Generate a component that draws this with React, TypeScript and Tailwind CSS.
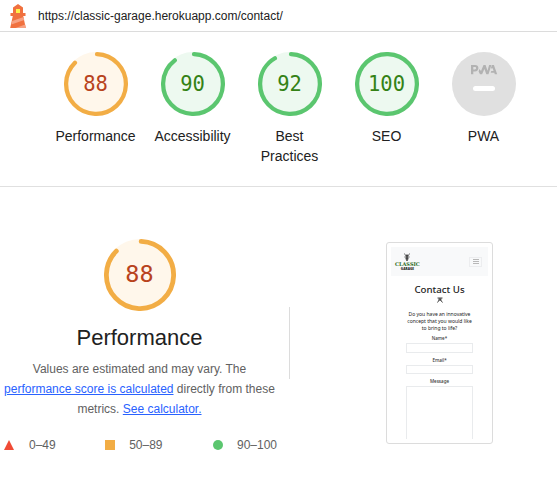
import React from "react";

const tones = {
  orange: { stroke: "#f2ad45", fill: "#fff7eb", text: "#b8431d" },
  green: { stroke: "#5bc66f", fill: "#edf9f0", text: "#348216" },
};

type Tone = keyof typeof tones;

function Gauge({ score, tone, size }: { score: number; tone: Tone; size: number }) {
  const c = tones[tone];
  const length = 2 * Math.PI * 56;
  const dash = score === 100 ? length : (score / 100) * length - 4;
  return (
    <div className="grid place-items-center" style={{ width: size, height: size }}>
      <svg viewBox="0 0 120 120" className="col-start-1 row-start-1 h-full w-full">
        <circle cx="60" cy="60" r="60" fill={c.fill} />
        <circle
          cx="60"
          cy="60"
          r="56"
          fill="none"
          stroke={c.stroke}
          strokeWidth="8"
          strokeLinecap="round"
          strokeDasharray={`${dash} ${length}`}
          transform="rotate(-88 60 60)"
        />
      </svg>
      <span
        className="col-start-1 row-start-1 -ml-px font-['DejaVu_Sans_Mono',monospace] leading-none"
        style={{ color: c.text, fontSize: size > 64 ? 23.5 : 20.5 }}
      >
        {score}
      </span>
    </div>
  );
}

function Lighthouse() {
  return (
    <svg width="16" height="24" viewBox="0 0 16 24">
      <path d="M8 0 L13 3.500 V9 H15.500 V12 H13.200 L15.800 24 H0.200 L2.800 12 H0.500 V9 H3 V3.500 Z" fill="#f0713f" />
      <path d="M2.200 17 L13.600 13 L14.200 16 L1.400 20.500 Z" fill="#f7a283" />
      <path d="M5.500 24 L15.200 20.500 L15.800 24 Z" fill="#f7a283" />
      <rect x="6" y="5" width="4" height="4" fill="#fff04a" />
    </svg>
  );
}

function PwaBadge() {
  return (
    <svg width="64" height="64" viewBox="0 0 64 64">
      <circle cx="32" cy="32" r="32" fill="#e0e0e0" />
      <g fill="#b2b2b2">
        <path fillRule="evenodd" d="M19 13 H23 C25.300 13 26.400 14.200 26.400 16 C26.400 18 25.200 19.400 23 19.400 H21.300 V22.300 H19 Z M21.300 15 V17.500 H22.800 C23.700 17.500 24.100 17 24.100 16.300 C24.100 15.500 23.700 15 22.800 15 Z" />
        <path d="M27.400 17 L29 19 L31.500 13 H33.600 L35.500 18.700 L37.100 13 H39.400 L36.500 22.300 H34.300 L32.400 17 L30.100 22.300 H28 L26.600 19.500 Z" />
        <path d="M39.900 13 H41.900 L45.200 22.300 H42.800 L42.300 20.800 H38.700 L39.300 18.900 H41.600 L40.500 15.700 L40 17 L39 15.700 Z" />
      </g>
      <rect x="21" y="34" width="22" height="5" rx="2.500" fill="#fff" />
    </svg>
  );
}

function Category({ label, children }: { label: string; children: React.ReactNode }) {
  return (
    <div className="flex w-[97px] flex-col items-center">
      {children}
      <div className="mt-[10px] -ml-px max-w-[81px] text-center text-[14px] leading-5 text-[#212121]">
        <span className="flex justify-center">
          <span>{label}</span>
        </span>
      </div>
    </div>
  );
}

function Field({ label, className }: { label: string; className: string }) {
  return (
    <div className="flex flex-col items-center">
      <span className="text-[4.500px] leading-[6px] font-medium text-[#333]">{label}</span>
      <div className={`mt-[2px] w-[67px] border border-[#e9ebed] ${className}`} />
    </div>
  );
}

function PagePreview() {
  return (
    <div className="h-[202px] w-[107px] rounded-[3px] border border-[#dcdcdc] bg-white p-1 font-['Noto_Sans',sans-serif]">
      <div className="flex h-full flex-col items-center overflow-hidden">
        <div className="flex h-[29px] w-full shrink-0 items-center justify-between bg-[#f8f9fa] pr-[6px] pl-1">
          <div className="flex flex-col items-center">
            <svg className="shrink-0" width="8" height="8" viewBox="0 0 8 8" fill="none" stroke="#333">
              <path d="M1.500 0.500 L2.500 2.500 H5.500 L6.500 0.500" strokeWidth=".7" />
              <path d="M4 1.500 V8" strokeWidth="1.400" />
              <path d="M1.500 4 H6.500 M2.300 5.800 H5.700" strokeWidth=".9" />
            </svg>
            <span className="font-['DejaVu_Serif',serif] text-[5px] leading-[6px] font-bold text-[#2c6b1e]">CLASSIC</span>
            <span className="text-[3.200px] leading-[4px] font-black text-[#222]">GARAGE</span>
          </div>
          <div className="flex h-[10px] w-[13px] flex-col items-center justify-center gap-[1px] border border-[#ecedef]">
            <i className="h-px w-[6px] bg-[#b8b8b8]" />
            <i className="h-px w-[6px] bg-[#b8b8b8]" />
            <i className="h-px w-[6px] bg-[#b8b8b8]" />
          </div>
        </div>
        <div className="mt-[7px] shrink-0 text-[9.700px] leading-[13px] font-medium text-[#222]">Contact Us</div>
        <svg className="mt-[1px] shrink-0" width="6" height="6" viewBox="0 0 6 6" fill="none" stroke="#333">
          <path d="M0.500 1 H5.500 M2.200 1 V3 L0.500 5.500 M4 1 L3.500 3 L5.500 5.500 M1.500 3 H4.500" strokeWidth=".9" />
        </svg>
        <div className="mt-[8px] shrink-0 text-center text-[5px] leading-[7px] whitespace-nowrap text-[#222]">
          Do you have an innovative
          <br />
          concept that you would like
          <br />
          to bring to life?
        </div>
        <div className="mt-[3px] flex shrink-0 flex-col gap-1">
          <Field label="Name*" className="h-[10px]" />
          <Field label="Email*" className="h-[9px]" />
          <Field label="Message" className="h-[70px]" />
        </div>
      </div>
    </div>
  );
}

export default function App() {
  return (
    <div className="h-[479px] w-[557px] overflow-hidden bg-white font-['Liberation_Sans',Arial,sans-serif]">
      <header className="flex h-8 items-center border-b border-[#dcdcdc] pl-[10px]">
        <Lighthouse />
        <span className="ml-3 text-[12px] text-[#212121]">https://classic-garage.herokuapp.com/contact/</span>
      </header>

      <section className="flex h-[155px] border-b border-[#e0e0e0] pt-5 pl-[47.500px]">
        <Category label="Performance"><Gauge score={88} tone="orange" size={64} /></Category>
        <Category label="Accessibility"><Gauge score={90} tone="green" size={64} /></Category>
        <Category label="Best Practices"><Gauge score={92} tone="green" size={64} /></Category>
        <Category label="SEO"><Gauge score={100} tone="green" size={64} /></Category>
        <Category label="PWA"><PwaBadge /></Category>
      </section>

      <main className="flex">
        <section className="flex w-[289px] flex-col pt-[52px]">
          <div className="flex w-[280px] flex-col items-center">
            <Gauge score={88} tone="orange" size={72} />
            <h1 className="mt-[11px] -ml-px text-[22px] leading-8 text-[#212121]">Performance</h1>
            <p className="mt-[5px] -ml-px text-center text-[12px] leading-5 whitespace-nowrap text-[#616161]">
              Values are estimated and may vary. The
              <br />
              <a className="text-[#2962ff] underline">performance score is calculated</a> directly from these
              <br />
              metrics. <a className="text-[#2962ff] underline">See calculator.</a>
            </p>
          </div>
          <div className="mt-4 flex w-[277px] items-center justify-between pl-1 text-[12px] leading-5 text-[#616161]">
            <span className="flex items-center gap-[15px]">
              <svg width="10" height="10" viewBox="0 0 10 10"><path d="M5 0 L10 10 H0 Z" fill="#f04b36" /></svg>
              0–49
            </span>
            <span className="-ml-px flex items-center gap-[14px]">
              <i className="h-[10px] w-[10px] bg-[#f2ad45]" />
              50–89
            </span>
            <span className="flex items-center gap-[14px]">
              <i className="h-[10px] w-[10px] rounded-full bg-[#5bc66f]" />
              90–100
            </span>
          </div>
        </section>
        <div className="mt-[120px] h-[72px] w-px bg-[#dcdcdc]" />
        <div className="mt-[55px] ml-24">
          <PagePreview />
        </div>
      </main>
    </div>
  );
}
